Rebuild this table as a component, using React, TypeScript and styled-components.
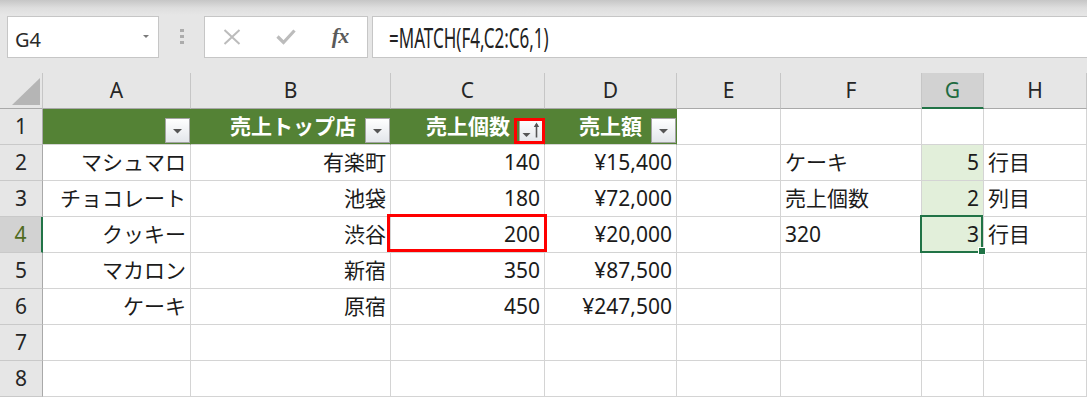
import React from "react";
import styled, { createGlobalStyle, css } from "styled-components";

const GlobalStyle = createGlobalStyle`
  html, body { margin: 0; padding: 0; background: #ffffff; }
  body { font-family: "Noto Sans", "Noto Sans CJK JP", sans-serif; }
  *, *::before, *::after { box-sizing: border-box; }
`;

const Window = styled.div`
  width: 1087px;
  height: 397px;
  overflow: hidden;
  display: flex;
  flex-direction: column;
  background: #ffffff;
`;

/* ---------- formula bar ---------- */

const Toolbar = styled.div`
  flex: none;
  height: 73px;
  display: flex;
  align-items: flex-start;
  padding: 16px 0 0 7px;
  background: linear-gradient(#c6c6c6 0px, #dedede 8px, #e6e6e6 15px);
`;

const NameBox = styled.div`
  flex: none;
  width: 152px;
  height: 42px;
  background: #ffffff;
  border: 1px solid #c6c6c6;
  display: flex;
  align-items: center;
  justify-content: space-between;
  padding: 5px 9px 0 7px;
  font-family: "Noto Sans", sans-serif;
  font-size: 20px;
  color: #2a2a2a;
`;

const Caret = styled.span`
  width: 0;
  height: 0;
  margin-top: -6px;
  border-left: 3px solid transparent;
  border-right: 3px solid transparent;
  border-top: 3px solid #7a7a7a;
`;

const Grip = styled.div`
  flex: none;
  width: 45px;
  display: flex;
  flex-direction: column;
  align-items: center;
  gap: 3px;
  padding-top: 13px;
`;

const GripDot = styled.span`
  width: 4px;
  height: 3px;
  background: #acacac;
`;

const FnButtons = styled.div`
  flex: none;
  width: 164px;
  height: 42px;
  background: #ffffff;
  border: 1px solid #c6c6c6;
  display: grid;
  grid-template-columns: repeat(3, 1fr);
  align-items: center;
  justify-items: center;
`;

const FxLabel = styled.span`
  font-family: "Liberation Serif", serif;
  font-style: italic;
  font-weight: 700;
  font-size: 22px;
  color: #5a5a5a;
  margin-top: -3px;
  letter-spacing: -1px;
`;

const FormulaBox = styled.div`
  flex: 1;
  height: 42px;
  margin-left: 4px;
  margin-right: -2px;
  background: #ffffff;
  border: 1px solid #c6c6c6;
  display: flex;
  align-items: center;
  padding-left: 16px;
  overflow: hidden;
`;

const FormulaText = styled.span`
  display: inline-block;
  font-family: "Noto Sans", sans-serif;
  font-size: 27px;
  line-height: 1;
  color: #222222;
  white-space: nowrap;
  transform: scaleX(0.63);
  transform-origin: left center;
`;

/* ---------- sheet grid ---------- */

const Sheet = styled.div`
  flex: none;
  display: grid;
  grid-template-columns: 43px 148px 200px 154px 132px 104px 141px 62px 1fr;
  grid-auto-rows: 36px;
  font-family: "Noto Sans", "Noto Sans CJK JP", sans-serif;
  font-size: 21px;
  color: #1b1b1b;
`;

const GridCell = styled.div`
  position: relative;
  display: flex;
  align-items: center;
  min-width: 0;
  line-height: 1;
  white-space: nowrap;
  border-right: 1px solid #d4d4d4;
  border-bottom: 1px solid #d4d4d4;
`;

const Corner = styled(GridCell)`
  background: #e6e6e6;
  justify-content: flex-end;
  align-items: flex-end;
  padding: 0 2px 3px 0;
  border-right-color: #c6c6c6;
  border-bottom-color: #a9a9a9;
`;

const CornerMark = styled.span`
  width: 28px;
  height: 27px;
  background: #b5b5b5;
  clip-path: polygon(100% 0, 100% 100%, 0 100%);
`;

const ColHead = styled(GridCell)<{ $active?: boolean }>`
  background: #e6e6e6;
  justify-content: center;
  color: #262626;
  border-right-color: #c6c6c6;
  border-bottom-color: #a9a9a9;
  ${(p) =>
    p.$active &&
    css`
      background: #d2d2d2;
      color: #1e6b41;
      border-bottom: 2px solid #217346;
    `}
`;

const RowHead = styled(GridCell)<{ $active?: boolean }>`
  background: #e6e6e6;
  justify-content: center;
  color: #262626;
  border-right-color: #a9a9a9;
  border-bottom-color: #c9c9c9;
  ${(p) =>
    p.$active &&
    css`
      background: #d2d2d2;
      color: #4f6b1e;
      border-right: 2px solid #217346;
    `}
`;

const TableHead = styled(GridCell)`
  background: #548235;
  color: #ffffff;
  font-weight: 700;
  justify-content: flex-end;
  border-right-color: #548235;
`;

const HeadLabel = styled.span`
  margin-right: 9px;
`;

const FilterButton = styled.span`
  align-self: flex-end;
  flex: none;
  width: 25px;
  height: 25px;
  margin-bottom: 1px;
  border: 1px solid #a3a3a3;
  background: linear-gradient(#ffffff, #e3e6ea);
  display: flex;
  align-items: center;
  justify-content: center;
`;

type Align = "left" | "right";

const Cell = styled(GridCell)<{ $align: Align; $shade?: boolean }>`
  justify-content: ${(p) => (p.$align === "right" ? "flex-end" : "flex-start")};
  padding: ${(p) => (p.$align === "right" ? "0 4px 0 0" : "0 0 0 4px")};
  background: ${(p) => (p.$shade ? "#e2efda" : "#ffffff")};
`;

/* red annotation boxes and the active-cell frame sit over the grid */

const ButtonCallout = styled.span`
  position: absolute;
  z-index: 3;
  top: 9px;
  right: -1px;
  width: 31px;
  height: 26px;
  border: 3px solid #ff0000;
`;

const CellCallout = styled.span`
  position: absolute;
  z-index: 3;
  top: -3px;
  left: -4px;
  right: -3px;
  bottom: 0;
  border: 3px solid #ff0000;
`;

const ActiveFrame = styled.span`
  position: absolute;
  z-index: 4;
  top: -2px;
  left: -2px;
  right: 0;
  bottom: -1px;
  border: 2px solid #217346;
`;

const FillHandle = styled.span`
  position: absolute;
  z-index: 5;
  right: -2px;
  bottom: -2px;
  width: 6px;
  height: 6px;
  background: #217346;
  box-shadow: 0 0 0 1px #ffffff;
`;

/* ---------- icons ---------- */

const CancelIcon = () => (
  <svg width="18" height="16" viewBox="0 0 18 16">
    <path d="M1.5 1 L16.5 15 M16.5 1 L1.5 15" stroke="#bcbcbc" strokeWidth="2" fill="none" />
  </svg>
);

const EnterIcon = () => (
  <svg width="20" height="16" viewBox="0 0 20 16">
    <path d="M1.5 7.5 L7.5 13.5 L18.5 1.5" stroke="#bcbcbc" strokeWidth="3.2" fill="none" />
  </svg>
);

const DropTriangle = () => (
  <svg width="23" height="23" viewBox="0 0 23 23">
    <path d="M7 10 L16 10 L11.5 14.5 Z" fill="#555555" />
  </svg>
);

const SortedDropTriangle = () => (
  <svg width="23" height="23" viewBox="0 0 23 23">
    <path d="M2.5 14 L10.5 14 L6.5 18 Z" fill="#555555" />
    <path d="M16.5 18.5 L16.5 5" stroke="#555555" strokeWidth="1.6" fill="none" />
    <path d="M13.8 8 L16.5 3.5 L19.2 8 Z" fill="#555555" />
  </svg>
);

/* ---------- data ---------- */

const COLUMNS = ["A", "B", "C", "D", "E", "F", "G", "H"];
const ALIGN: Align[] = ["right", "right", "right", "right", "left", "left", "right", "left"];
const ACTIVE_COL = 6;
const ACTIVE_ROW = 4;

const TABLE_HEADERS = ["", "売上トップ店", "売上個数", "売上額"];
const SORTED_HEADER = 2;

const BODY: string[][] = [
  ["マシュマロ", "有楽町", "140", "¥15,400", "", "ケーキ", "5", "行目"],
  ["チョコレート", "池袋", "180", "¥72,000", "", "売上個数", "2", "列目"],
  ["クッキー", "渋谷", "200", "¥20,000", "", "320", "3", "行目"],
  ["マカロン", "新宿", "350", "¥87,500", "", "", "", ""],
  ["ケーキ", "原宿", "450", "¥247,500", "", "", "", ""],
  ["", "", "", "", "", "", "", ""],
  ["", "", "", "", "", "", "", ""],
];

export default function App() {
  return (
    <Window>
      <GlobalStyle />
      <Toolbar>
        <NameBox>
          <span>G4</span>
          <Caret />
        </NameBox>
        <Grip>
          <GripDot />
          <GripDot />
          <GripDot />
        </Grip>
        <FnButtons>
          <CancelIcon />
          <EnterIcon />
          <FxLabel>fx</FxLabel>
        </FnButtons>
        <FormulaBox>
          <FormulaText>=MATCH(F4,C2:C6,1)</FormulaText>
        </FormulaBox>
      </Toolbar>

      <Sheet>
        <Corner>
          <CornerMark />
        </Corner>
        {COLUMNS.map((c, i) => (
          <ColHead key={c} $active={i === ACTIVE_COL}>
            {c}
          </ColHead>
        ))}

        <RowHead>1</RowHead>
        {TABLE_HEADERS.map((h, i) => (
          <TableHead key={`h${i}`}>
            {h && <HeadLabel>{h}</HeadLabel>}
            <FilterButton>{i === SORTED_HEADER ? <SortedDropTriangle /> : <DropTriangle />}</FilterButton>
            {i === SORTED_HEADER && <ButtonCallout />}
          </TableHead>
        ))}
        {COLUMNS.slice(TABLE_HEADERS.length).map((c, j) => (
          <Cell key={`r1${c}`} $align={ALIGN[TABLE_HEADERS.length + j]} />
        ))}

        {BODY.map((row, r) => {
          const rowNo = r + 2;
          return (
            <React.Fragment key={rowNo}>
              <RowHead $active={rowNo === ACTIVE_ROW}>{rowNo}</RowHead>
              {row.map((value, c) => {
                const shaded = c === ACTIVE_COL && rowNo >= 2 && rowNo <= 4;
                const isActive = c === ACTIVE_COL && rowNo === ACTIVE_ROW;
                const marked = c === 2 && value === "200";
                return (
                  <Cell key={c} $align={ALIGN[c]} $shade={shaded}>
                    {value}
                    {marked && <CellCallout />}
                    {isActive && (
                      <>
                        <ActiveFrame />
                        <FillHandle />
                      </>
                    )}
                  </Cell>
                );
              })}
            </React.Fragment>
          );
        })}
      </Sheet>
    </Window>
  );
}
